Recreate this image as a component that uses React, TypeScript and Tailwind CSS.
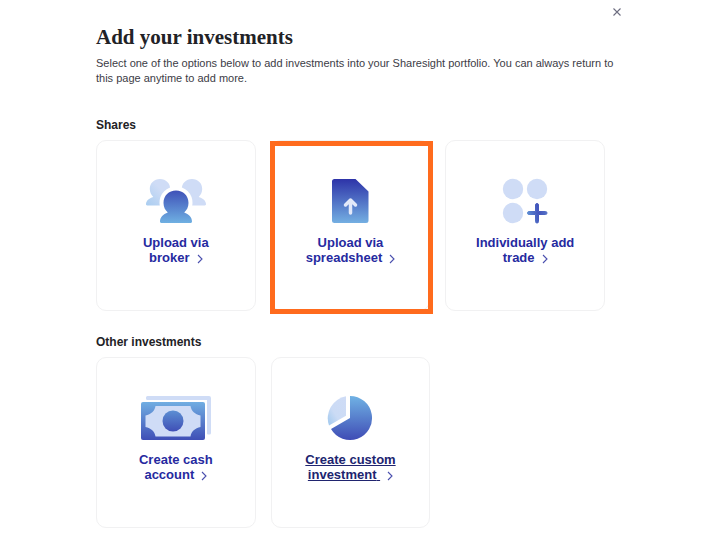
import type { ReactNode } from "react";

type Option = {
  lines: [string, string];
  icon: ReactNode;
  highlighted?: boolean;
  underlined?: boolean;
};

const BrokerIcon = () => (
  <svg width="62" height="46" viewBox="0 0 62 46" aria-hidden="true">
    <defs>
      <linearGradient id="brokerFront" x1="0" y1="0" x2="0" y2="1">
        <stop offset="0" stopColor="#3f51b8" />
        <stop offset="1" stopColor="#6fb0e2" />
      </linearGradient>
      <linearGradient id="brokerLeft" x1="0" y1="1" x2="1" y2="0">
        <stop offset="0" stopColor="#a9cdf0" />
        <stop offset="0.6" stopColor="#cfdcf6" />
      </linearGradient>
      <path
        id="person"
        d="M31 12.500c-7.200 0-12.500 5.300-12.500 12.400 0 4 1.700 7.200 4.300 9.500-4.600 1.500-7.800 4.800-7.800 9.100 0 .9.600 1.500 1.500 1.500h29c.9 0 1.500-.6 1.500-1.500 0-4.300-3.200-7.600-7.800-9.100 2.600-2.300 4.300-5.500 4.300-9.500C43.500 17.800 38.200 12.500 31 12.500z"
      />
    </defs>
    <path
      d="M15 1C9 1 4.800 5.400 4.800 11c0 3.300 1.400 6 3.500 7.900C4 20.100 1 22.800 1 26.200c0 .7.500 1.200 1.200 1.200H27L25.200 11C25.200 5.400 21 1 15 1z"
      fill="url(#brokerLeft)"
    />
    <path
      d="M47 1c6 0 10.200 4.400 10.200 10 0 3.300-1.400 6-3.500 7.900 4.300 1.200 7.300 3.900 7.300 7.300 0 .7-.5 1.200-1.200 1.200H35L36.800 11C36.800 5.400 41 1 47 1z"
      fill="#cfdcf6"
    />
    <use href="#person" fill="#fff" stroke="#fff" strokeWidth="8" />
    <use href="#person" fill="url(#brokerFront)" />
  </svg>
);

const SpreadsheetIcon = () => (
  <svg width="38" height="46" viewBox="0 0 38 46" aria-hidden="true">
    <defs>
      <linearGradient id="sheet" x1="0" y1="0" x2="0" y2="1">
        <stop offset="0" stopColor="#2d33a8" />
        <stop offset="1" stopColor="#74afe2" />
      </linearGradient>
    </defs>
    <path
      d="M3.500 1H24.500L37.500 13.500V42.500A2.500 2.500 0 0 1 35 45H3.500A2.500 2.500 0 0 1 1 42.500V3.500A2.500 2.500 0 0 1 3.500 1z"
      fill="url(#sheet)"
    />
    <path
      d="M19.500 35V22M14.500 27l5-5 5 5"
      fill="none"
      stroke="#e3e9f9"
      strokeWidth="3.500"
      strokeLinecap="round"
      strokeLinejoin="round"
    />
  </svg>
);

const TradeIcon = () => (
  <svg width="46" height="46" viewBox="0 0 46 46" aria-hidden="true">
    <defs>
      <linearGradient id="plus" gradientUnits="userSpaceOnUse" x1="25" y1="35" x2="44" y2="32">
        <stop offset="0" stopColor="#5e8fd4" />
        <stop offset="0.6" stopColor="#4355bb" />
        <stop offset="1" stopColor="#5470c6" />
      </linearGradient>
    </defs>
    <g fill="#cfdcf6">
      <circle cx="11" cy="11" r="10.200" />
      <circle cx="35" cy="11" r="10.200" />
      <circle cx="11" cy="35" r="10.200" />
    </g>
    <path
      d="M33.500 27a1.500 1.500 0 0 1 3 0v6.500H43.500a1.500 1.500 0 0 1 0 3H36.500V43.500a1.500 1.500 0 0 1-3 0V36.500H27a1.500 1.500 0 0 1 0-3h6.500z"
      fill="url(#plus)"
      stroke="url(#plus)"
    />
  </svg>
);

const CashIcon = () => (
  <svg width="70" height="46" viewBox="0 0 70 46" aria-hidden="true">
    <defs>
      <linearGradient id="note" x1="0" y1="0" x2="0" y2="1">
        <stop offset="0" stopColor="#70aee2" />
        <stop offset="1" stopColor="#3f4fb6" />
      </linearGradient>
      <linearGradient id="coin" x1="0" y1="0" x2="0" y2="1">
        <stop offset="0" stopColor="#5c8fd3" />
        <stop offset="1" stopColor="#3f4fb6" />
      </linearGradient>
    </defs>
    <path
      d="M6.500 1H68a2 2 0 0 1 2 2V38a1.500 1.500 0 0 1-1.500 1.500H67A1 1 0 0 1 66 38.500V5H6.500A1.500 1.500 0 0 1 5 3.500V2.500A1.500 1.500 0 0 1 6.500 1z"
      fill="#cfdcf6"
    />
    <rect y="7" width="64" height="38" rx="2" fill="url(#note)" />
    <path
      d="M14.500 11H49.500c.8 5 4.500 8.500 10 9.500V32c-5.500 1-9.200 4.500-10 9.500H14.500C13.700 36.500 10 33 4.500 32V20.500c5.500-1 9.200-4.500 10-9.500z"
      fill="#cfdcf6"
    />
    <circle cx="32" cy="26" r="10.500" fill="url(#coin)" />
  </svg>
);

const CustomIcon = () => (
  <svg width="46" height="46" viewBox="0 0 46 46" aria-hidden="true">
    <defs>
      <linearGradient id="pie" x1="0" y1="0" x2="0" y2="1">
        <stop offset="0" stopColor="#70b2e4" />
        <stop offset="1" stopColor="#3f4cb5" />
      </linearGradient>
      <linearGradient id="slice" x1="1" y1="0" x2="0" y2="1">
        <stop offset="0" stopColor="#cfdcf6" />
        <stop offset="0.6" stopColor="#cbdbf5" />
        <stop offset="1" stopColor="#9fc8ee" />
      </linearGradient>
    </defs>
    <path d="M23 1A22 22 0 1 1 4 34L23 23z" fill="url(#pie)" />
    <path d="M19 1.200V20.700L2 30.500A22.300 22.300 0 0 1 19 1.200z" fill="url(#slice)" />
  </svg>
);

const Chevron = () => (
  <svg
    width="6"
    height="10"
    viewBox="0 0 6 10"
    fill="none"
    stroke="#4a4fae"
    strokeWidth="1.100"
    className="ml-[7px] inline-block align-[-2px]"
    aria-hidden="true"
  >
    <path d="M1 1l4 4-4 4" />
  </svg>
);

const SHARES: Option[] = [
  { lines: ["Upload via", "broker"], icon: <BrokerIcon /> },
  { lines: ["Upload via", "spreadsheet"], icon: <SpreadsheetIcon />, highlighted: true },
  { lines: ["Individually add", "trade"], icon: <TradeIcon /> },
];

const OTHERS: Option[] = [
  { lines: ["Create cash", "account"], icon: <CashIcon /> },
  { lines: ["Create custom", "investment"], icon: <CustomIcon />, underlined: true },
];

const OptionCard = ({ lines, icon, highlighted, underlined }: Option) => (
  <a
    href="#"
    className="relative flex flex-col items-center rounded-[10px] border border-[#f1f1f2] pt-[37px] pb-[45px] text-center text-[13px] leading-[15px] font-bold text-[#262aa0]"
  >
    {icon}
    <span className={underlined ? "mt-[11px] text-[#20246f] underline" : "mt-[11px]"}>
      {lines[0]}
      <br />
      {lines[1]}
      {underlined && " "}
      <Chevron />
    </span>
    {highlighted && (
      <span className="absolute top-0 -right-1 -bottom-1 -left-0.5 border-[5px] border-[#ff6b1d]" />
    )}
  </a>
);

const Section = ({ title, options }: { title: string; options: Option[] }) => (
  <section>
    <h2 className="text-[12px] leading-4 font-bold text-[#222226]">{title}</h2>
    <div className="mt-[7px] grid grid-cols-3 gap-[15px]">
      {options.map((option) => (
        <OptionCard key={option.lines.join(" ")} {...option} />
      ))}
    </div>
  </section>
);

const App = () => (
  <main className="min-h-screen bg-white font-['Liberation_Sans',sans-serif]">
    <div className="mx-auto max-w-[549px] px-5 pt-1.5">
      <div className="-mr-[18px] flex justify-end">
        <button type="button" aria-label="Close" className="p-0.5">
          <svg width="8" height="8" viewBox="0 0 8 8" stroke="#6d6d80" strokeWidth="1.100">
            <path d="M.5.500l7 7M7.500.500l-7 7" />
          </svg>
        </button>
      </div>
      <h1 className="mt-[5px] font-['Liberation_Serif',serif] text-[21px] leading-7 font-bold text-[#222226]">
        Add your investments
      </h1>
      <p className="mt-[5px] -mr-3 text-[11px] leading-[15px] text-[#3c3c46]">
        Select one of the options below to add investments into your Sharesight portfolio. You can always return to
        this page anytime to add more.
      </p>
      <div className="mt-[31px] flex flex-col gap-[23px]">
        <Section title="Shares" options={SHARES} />
        <Section title="Other investments" options={OTHERS} />
      </div>
    </div>
  </main>
);

export default App;
